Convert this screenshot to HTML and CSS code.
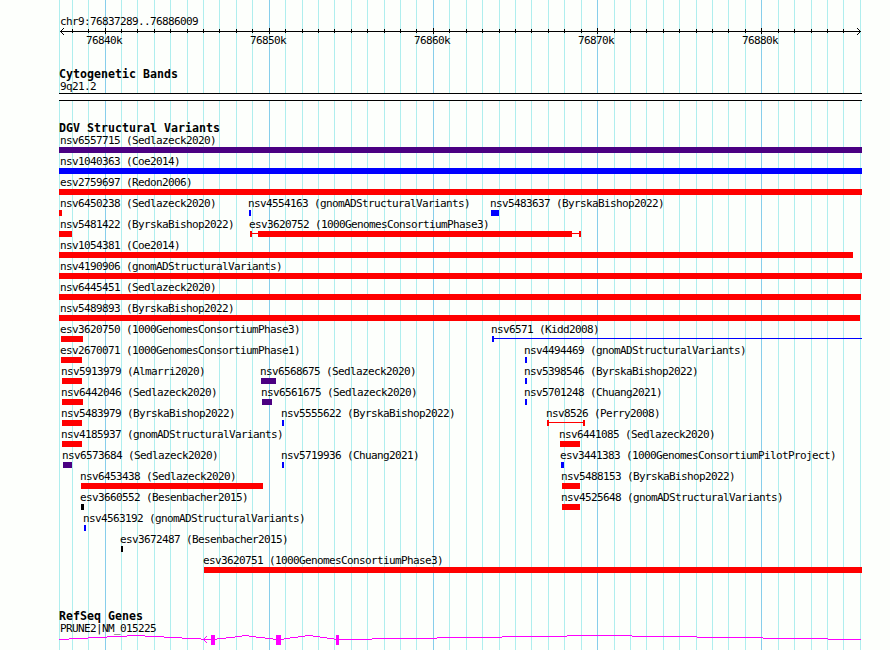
FILE: index.html
```html
<!DOCTYPE html>
<html lang="en">
<head>
<meta charset="utf-8">
<title>chr9:76837289..76886009</title>
<link rel="stylesheet" href="styles.css">
</head>
<body>
<main class="browser">
  <svg class="gridlines" width="890" height="650" shape-rendering="crispEdges" aria-hidden="true"></svg>
  <div class="panels">
    <header class="ruler">
      <div class="label region">chr9:76837289..76886009</div>
      <svg class="axis" width="890" height="8" shape-rendering="crispEdges" aria-hidden="true"></svg>
      <div class="scale">
        <span class="label">76840k</span><span class="label">76850k</span><span class="label">76860k</span><span class="label">76870k</span><span class="label">76880k</span>
      </div>
    </header>
    <section class="bands">
      <h2>Cytogenetic Bands</h2>
      <div class="label">9q21.2</div>
      <div class="band"></div>
    </section>
    <section class="variants">
      <h2>DGV Structural Variants</h2>
      <div class="rows"></div>
    </section>
    <section class="genes">
      <h2>RefSeq Genes</h2>
      <div class="label">PRUNE2|NM_015225</div>
      <svg class="gene" width="890" height="16" viewBox="0 634 890 16" shape-rendering="crispEdges" aria-hidden="true">
        <path class="intron" d="M59 639.5H69M69 638.5H88M88 637.5H107M107 636.5H127M127 635.5H145M145 636.5H164M164 637.5H182M182 638.5H201M201 639.5H217M217 638.5H226M226 637.5H235M235 636.5H242M242 635.5H249M249 636.5H256M256 637.5H265M265 638.5H273M273 639.5H284M284 638.5H290M290 637.5H298M298 636.5H305M305 635.5H313M313 636.5H320M320 637.5H327M327 638.5H334M334 639.5H372M372 638.5H437M437 637.5H502M502 636.5H567M567 635.5H632M632 636.5H697M697 637.5H763M763 638.5H828M828 639.5H861"/>
        <path class="exon" d="M211 635h4v10h-4zM276 635h5v10h-5zM336 635h3v10h-3zM203 639h1v1h-1zM204 638h1v1h-1zM204 640h1v1h-1zM205 637h1v1h-1zM205 641h1v1h-1zM206 636h1v1h-1zM206 642h1v1h-1z"/>
      </svg>
    </section>
  </div>
</main>
<script src="script.js"></script>
</body>
</html>
```
FILE: styles.css
```css
* { box-sizing: border-box; }
body { margin: 0; background: #fdfffc; color: #000; }
.browser { display: grid; width: 890px; height: 650px; overflow: hidden; }
.gridlines, .panels { grid-area: 1 / 1; }
svg { display: block; }
.minor { fill: #afeeee; }
.major { fill: #87ceeb; }
.label {
  font: 11px/14px "DejaVu Sans Mono", monospace;
  letter-spacing: -0.622px;
  white-space: pre;
  height: 12px;
}
h2 {
  margin: 0;
  padding-left: 59px;
  height: 12px;
  font: bold 11.6px/12px "DejaVu Sans Mono", monospace;
  letter-spacing: 0.016px;
  white-space: pre;
}
.ruler { height: 68px; padding-top: 15px; }
.region, .bands > .label, .genes > .label { padding-left: 60px; }
.scale { display: flex; gap: 128px; padding-left: 86px; margin-top: -1px; }
.scale .label { width: 36px; }
.bands { height: 54px; }
.band {
  width: 803px;
  height: 8px;
  margin: 1px 0 0 59px;
  border: solid #000;
  border-width: 1px 0;
  background: #fff;
}
.variants { height: 488px; }
.row { display: grid; height: 21px; }
.feature { grid-area: 1 / 1; height: 21px; }
.feature .label { width: max-content; margin-bottom: 1px; }
.glyph { display: grid; grid-template-columns: minmax(0, 1fr); height: 6px; }
.glyph > * { grid-area: 1 / 1; }
.solid { background: currentColor; }
.line { height: 1px; margin-top: 2px; background: currentColor; }
.cap { width: 2px; background: currentColor; }
.cap.end { justify-self: end; }
.red { color: #f00; }
.blue { color: #00f; }
.purple { color: #4b0082; }
.black { color: #000; }
.intron { stroke: #f0f; stroke-width: 1; fill: none; }
.exon { fill: #f0f; }
```
FILE: script.js
```js
const majors = [105, 269, 433, 597, 761];
const minors = [59, 72, 88, 121, 137, 154, 170, 187, 203, 219, 236, 252, 285, 302, 318, 334,
  351, 367, 384, 400, 416, 449, 466, 482, 499, 515, 531, 548, 564, 581, 614, 630, 646,
  663, 679, 696, 712, 728, 745, 778, 794, 811, 827, 843, 860];
const rect = (x, y, w, h, cls = "") => `<rect class="${cls}" x="${x}" y="${y}" width="${w}" height="${h}"/>`;

document.querySelector(".gridlines").innerHTML =
  minors.map(x => rect(x, 0, 1, 650, "minor")).join("") +
  majors.map(x => rect(x, 0, 1, 650, "major")).join("");

let axis = rect(60, 4, 801, 1);
minors.slice(1, -1).forEach(x => { axis += rect(x, 2, 1, 4); });
majors.forEach(x => { axis += rect(x, 1, 1, 6); });
for (let i = 1; i <= 3; i++) {
  axis += rect(60 + i, 4 - i, 1, 1) + rect(60 + i, 4 + i, 1, 1);
  axis += rect(860 - i, 4 - i, 1, 1) + rect(860 - i, 4 + i, 1, 1);
}
document.querySelector(".axis").innerHTML = axis;

// Feature: name, start, end, colour, label start, optional inner block [start, end]
const rows = [
  [["nsv6557715 (Sedlazeck2020)", 59, 862, "purple", 60]],
  [["nsv1040363 (Coe2014)", 59, 862, "blue", 60]],
  [["esv2759697 (Redon2006)", 59, 862, "red", 60]],
  [["nsv6450238 (Sedlazeck2020)", 59, 62, "red", 60],
   ["nsv4554163 (gnomADStructuralVariants)", 249, 251, "blue", 248],
   ["nsv5483637 (ByrskaBishop2022)", 491, 499, "blue", 490]],
  [["nsv5481422 (ByrskaBishop2022)", 59, 72, "red", 60],
   ["esv3620752 (1000GenomesConsortiumPhase3)", 250, 581, "red", 249, [258, 572]]],
  [["nsv1054381 (Coe2014)", 59, 853, "red", 60]],
  [["nsv4190906 (gnomADStructuralVariants)", 59, 862, "red", 60]],
  [["nsv6445451 (Sedlazeck2020)", 59, 861, "red", 60]],
  [["nsv5489893 (ByrskaBishop2022)", 59, 860, "red", 60]],
  [["esv3620750 (1000GenomesConsortiumPhase3)", 61, 83, "red", 60],
   ["nsv6571 (Kidd2008)", 492, 862, "blue", 491, "open"]],
  [["esv2670071 (1000GenomesConsortiumPhase1)", 61, 82, "red", 60],
   ["nsv4494469 (gnomADStructuralVariants)", 525, 527, "blue", 524]],
  [["nsv5913979 (Almarri2020)", 62, 82, "red", 61],
   ["nsv6568675 (Sedlazeck2020)", 261, 276, "purple", 260],
   ["nsv5398546 (ByrskaBishop2022)", 525, 527, "blue", 524]],
  [["nsv6442046 (Sedlazeck2020)", 62, 83, "red", 61],
   ["nsv6561675 (Sedlazeck2020)", 262, 272, "purple", 261],
   ["nsv5701248 (Chuang2021)", 525, 527, "blue", 524]],
  [["nsv5483979 (ByrskaBishop2022)", 62, 82, "red", 61],
   ["nsv5555622 (ByrskaBishop2022)", 282, 284, "blue", 281],
   ["nsv8526 (Perry2008)", 547, 585, "red", 546, "span"]],
  [["nsv4185937 (gnomADStructuralVariants)", 62, 82, "red", 61],
   ["nsv6441085 (Sedlazeck2020)", 560, 580, "red", 559]],
  [["nsv6573684 (Sedlazeck2020)", 63, 72, "purple", 62],
   ["nsv5719936 (Chuang2021)", 282, 284, "blue", 281],
   ["esv3441383 (1000GenomesConsortiumPilotProject)", 561, 564, "blue", 560]],
  [["nsv6453438 (Sedlazeck2020)", 81, 263, "red", 80],
   ["nsv5488153 (ByrskaBishop2022)", 562, 580, "red", 561]],
  [["esv3660552 (Besenbacher2015)", 81, 84, "black", 80],
   ["nsv4525648 (gnomADStructuralVariants)", 562, 580, "red", 561]],
  [["nsv4563192 (gnomADStructuralVariants)", 84, 86, "blue", 83]],
  [["esv3672487 (Besenbacher2015)", 121, 123, "black", 120]],
  [["esv3620751 (1000GenomesConsortiumPhase3)", 204, 862, "red", 203]]
];

function glyph(start, end, inner) {
  if (!inner) return '<i class="solid"></i>';
  let parts = '<i class="line"></i><i class="cap"></i>';
  if (inner !== "open") parts += '<i class="cap end"></i>';
  if (Array.isArray(inner)) {
    parts += `<i class="solid" style="margin:0 ${end - inner[1]}px 0 ${inner[0] - start}px"></i>`;
  }
  return parts;
}

document.querySelector(".rows").innerHTML = rows.map(row =>
  `<div class="row">${row.map(([name, start, end, colour, labelStart, inner]) =>
    `<div class="feature"><div class="label" style="margin-left:${labelStart}px">${name}</div>` +
    `<div class="glyph ${colour}" style="margin-left:${start}px;width:${end - start}px">${glyph(start, end, inner)}</div></div>`
  ).join("")}</div>`).join("");
```
